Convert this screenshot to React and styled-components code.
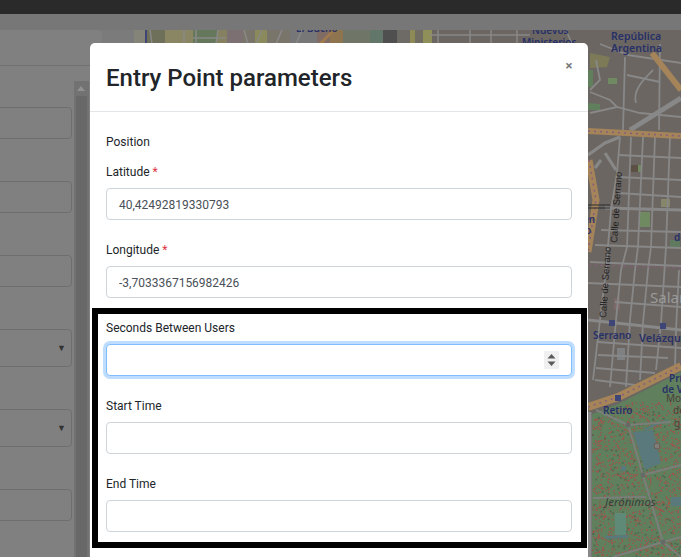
import { useMemo } from 'react';
import styled, { createGlobalStyle } from 'styled-components';

const GlobalStyle = createGlobalStyle`
    html, body {
        margin: 0;
        padding: 0;
        background: #808080;
    }
    * {
        box-sizing: border-box;
    }
`;

const Page = styled.div`
    position: relative;
    width: 681px;
    height: 557px;
    overflow: hidden;
    display: flex;
    flex-direction: column;
    background: #7b7b7b;
    font-family: Roboto, "Liberation Sans", sans-serif;
`;

const TopBar = styled.div`
    height: 14px;
    flex: none;
    background: #2b2a2b;
`;

const SubBar = styled.div`
    height: 16px;
    flex: none;
    background: #777777;
`;

const Workspace = styled.div`
    flex: 1;
    min-height: 0;
    display: flex;
    gap: 32px;
`;

const Sidebar = styled.aside`
    width: 102px;
    flex: none;
    display: flex;
    flex-direction: column;
    overflow: hidden;
    background: #808080;
    border-top-right-radius: 4px;
`;

const SidebarHead = styled.div`
    height: 36px;
    flex: none;
    border-bottom: 1px solid #707070;
`;

const SidebarBody = styled.div`
    flex: 1;
    display: flex;
    gap: 2px;
    min-height: 0;
`;

const SidebarFields = styled.div`
    width: 72px;
    flex: none;
    padding-top: 41px;
    display: flex;
    flex-direction: column;
    gap: 42px;
    overflow: hidden;
`;

const GhostField = styled.div`
    flex: none;
    height: ${(p) => (p.$select ? 38 : 32)}px;
    margin-left: -10px;
    display: flex;
    align-items: center;
    justify-content: flex-end;
    padding-right: 5px;
    border: 1px solid #6e6e6e;
    border-radius: 4px;
    color: #333333;
    font-size: 9px;
`;

const Scrollbar = styled.div`
    width: 15px;
    flex: none;
    margin-top: 15px;
    padding: 15px 2px 0;
    position: relative;
    background: #727272;
`;

const ScrollArrow = styled.span`
    position: absolute;
    top: 5px;
    left: 3px;
    width: 0;
    height: 0;
    border-left: 4px solid transparent;
    border-right: 4px solid transparent;
    border-bottom: 5px solid #919191;
`;

const ScrollThumb = styled.div`
    height: 100%;
    background: #686868;
`;

const MapPane = styled.div`
    flex: 1;
    min-width: 0;
    background: #6b6662;
`;

const MapSvg = styled.svg`
    display: block;
    width: 547px;
    height: 527px;
`;

const Modal = styled.section`
    position: absolute;
    top: 43px;
    left: 90px;
    width: 498px;
    background: #ffffff;
    border-radius: 5px 5px 0 0;
`;

const ModalHeader = styled.header`
    height: 69px;
    padding: 0 16px;
    position: relative;
    display: flex;
    align-items: center;
    border-bottom: 1px solid #e3e6e9;
`;

const ModalTitle = styled.h1`
    margin: 1px 0 0;
    font-size: 24px;
    font-weight: 500;
    line-height: 36px;
    color: #212529;
`;

const CloseButton = styled.button`
    position: absolute;
    top: 14px;
    right: 12px;
    width: 14px;
    height: 18px;
    padding: 0;
    border: 0;
    background: none;
    color: #777777;
    font-family: Roboto, sans-serif;
    font-size: 13px;
    font-weight: 700;
    line-height: 18px;
`;

const ModalBody = styled.div`
    padding: 20px 16px 40px;
    display: flex;
    flex-direction: column;
    gap: 20px;
`;

const SectionLabel = styled.div`
    height: 18px;
    margin-bottom: -8px;
    font-size: 12px;
    line-height: 20px;
    color: #212529;
`;

const Group = styled.div`
    display: flex;
    flex-direction: column;
    gap: 8px;
`;

const Label = styled.label`
    height: 18px;
    font-size: 12px;
    line-height: 20px;
    color: #212529;
`;

const Required = styled.span`
    color: #dc3545;
`;

const InputWrap = styled.div`
    position: relative;
    height: 32px;
`;

const Input = styled.input`
    display: block;
    width: 100%;
    height: 32px;
    padding: 2px 12px 0;
    border: 1px solid ${(p) => (p.$focused ? '#80bdff' : '#ced4da')};
    border-radius: 4px;
    outline: 0;
    background: #ffffff;
    box-shadow: ${(p) => (p.$focused ? '0 0 0 3px #bfdeff' : 'none')};
    font-family: inherit;
    font-size: 12px;
    color: #495057;
`;

const Spinner = styled.span`
    position: absolute;
    top: 7px;
    right: 13px;
    width: 15px;
    height: 18px;
    display: flex;
    align-items: center;
    justify-content: center;
    background: #f0f0f0;
`;

const Highlight = styled.div`
    position: absolute;
    top: 308px;
    left: 92px;
    width: 495px;
    height: 240px;
    border: 6px solid #000000;
    pointer-events: none;
`;

// colours are as they look under the modal backdrop
const C = {
    street: '#888888',
    orange: '#a5845a',
    dash: '#85607a',
    park: '#5f7f5d',
    parkPath: '#7b7f7b',
    water: '#5a797c',
    metro: '#3e4678',
    label: '#283068',
};

const streets = [
    // north-south grid
    'M620 137L617 173L611 210L606 270L600 320L593 380',
    'M631 137L627 247L621 270L616 320L610 387',
    'M643 137L638 247L635 270L630 320L626 387',
    'M655 137L651 247L648 270L643 323L640 380',
    'M670 137L666 247L661 323L656 370',
    'M679 270L676 330L675 367',
    'M625 57L623 130',
    'M660 44L659 130',
    // east-west grid
    'M618 155L681 158',
    'M618 177L681 180',
    'M618 193L681 197',
    'M601 230L681 232',
    'M595 245L681 248',
    'M590 262L681 266',
    'M588 283L681 287',
    'M615 302L681 307',
    'M598 342L681 348',
    'M598 355L668 358',
    'M596 368L655 373',
    'M595 380L635 385',
    'M628 55L681 63',
    'M627 75L660 82',
    'M590 113L617 107L640 113L681 117',
    // odd bits in the north part
    'M636 103C632 90 645 78 653 70',
    'M600 44L628 55',
    'M590 92L610 100L617 107',
    'M596 60L600 80L590 90',
];

const wideStreets = [
    'M605 208L681 210',
    'M588 320L681 330',
    'M605 153L616 170',
    'M588 155L605 143L620 137',
    'M601 160L595 168',
    'M589 412V557',
];

const parkPaths = [
    'M596 410L628 425L643 475L663 542',
    'M628 425L671 422',
    'M643 475L681 465',
    'M593 498L646 497',
    'M663 542L681 537',
    'M663 542L613 557',
    'M663 542L681 557',
];

const stripBlocks = [
    [134, 11, '#858478'], [145, 20, '#6e7059'], [165, 28, '#8a8664'], [193, 24, '#66785c'], [217, 10, '#85805f'],
    [227, 16, '#7c7072'], [243, 12, '#79756b'], [255, 12, '#8b8a5c'], [267, 23, '#79756b'], [290, 27, '#777777'], [317, 13, '#7f6c65'],
    [330, 13, '#8f754f'], [343, 27, '#6f7668'], [370, 13, '#62776a'], [383, 14, '#4f4f50'], [397, 13, '#6e6a66'],
    [410, 5, '#8d8a55'], [415, 8, '#716d63'], [423, 9, '#8f8f5a'], [432, 158, '#6b6662'],
];

const stripStreets = [
    [150, 152], [184, 184], [196, 196], [218, 216], [244, 248], [262, 256], [282, 276], [302, 296], [438, 438], [470, 470], [491, 491], [517, 517], [566, 572],
];

// small fake-random sprinkle for the trees in the park
const makeDots = (count, seedStart) => {
    const dots = [];
    let seed = seedStart;
    const next = () => {
        seed = (seed * 9301 + 49297) % 233280;
        return seed / 233280;
    };
    for (let i = 0; i < count; i++) {
        dots.push({ x: 592 + next() * 89, y: 402 + next() * 155 });
    }
    return dots;
};

const inPark = (d) => d.y > 418 - (d.x - 592) * 0.4;

const MapLabel = ({ x, y, size = 10, weight = 600, fill = C.label, italic, children }) => (
    <text
        x={x}
        y={y}
        fontFamily="'Noto Sans', sans-serif"
        fontSize={size}
        fontWeight={weight}
        fontStyle={italic ? 'italic' : 'normal'}
        fill={fill}
    >
        {children}
    </text>
);

const RoadLabel = ({ x, y, children }) => (
    <text
        transform={`translate(${x} ${y}) rotate(-86)`}
        fontFamily="'Liberation Sans', sans-serif"
        fontSize="9.5"
        fill="#1f1f1f"
    >
        {children}
    </text>
);

const CityMap = () => {
    const red = useMemo(() => makeDots(1100, 17).filter(inPark), []);
    const dark = useMemo(() => makeDots(160, 4242).filter(inPark), []);

    return (
        <MapSvg viewBox="134 30 547 527" aria-label="Map">
            {stripBlocks.map(([x, w, fill]) => (
                <rect key={x} x={x} y={30} width={w} height={14} fill={fill} />
            ))}
            {stripStreets.map(([x1, x2]) => (
                <line key={x1} x1={x1} y1={30} x2={x2} y2={44} stroke={C.street} strokeWidth="1.5" />
            ))}
            <path d="M193 38H226M430 35H530" stroke={C.street} strokeWidth="1.3" />
            <rect x={145} y={30} width={2} height={14} fill={C.metro} />
            <path d="M320 44L332 32" stroke="#a0794c" strokeWidth="3" />

            <path d="M590 53L610 57L607 67L590 68Z" fill="#7d7a58" />
            <path d="M588 70H593V87H588ZM588 103L600 104V110H588Z" fill={C.park} />
            <rect x={608} y={78} width={9} height={6} fill="#6f8a60" />
            <rect x={640} y={212} width={10} height={15} fill="#6f8a60" />
            <rect x={670} y={240} width={10} height={7} fill="#5f7a5e" />
            <rect x={631} y={165} width={7} height={7} fill="#5c5045" />
            <rect x={638} y={165} width={4} height={7} fill="#6f8a60" />
            <rect x={661} y={199} width={9} height={8} fill="#85866a" />
            <rect x={614} y={298} width={6} height={12} fill="#7d6a68" />
            <rect x={617} y={348} width={8} height={12} fill="#7f8082" />

            {streets.map((d) => (
                <path key={d} d={d} fill="none" stroke={C.street} strokeWidth="1.8" />
            ))}
            {wideStreets.map((d) => (
                <path key={d} d={d} fill="none" stroke={C.street} strokeWidth="3.2" />
            ))}
            <path d="M630 130L681 98" stroke={C.street} strokeWidth="5" />

            <path d="M652 53L681 90" stroke={C.orange} strokeWidth="6" />
            <path d="M588 131L681 136" stroke={C.orange} strokeWidth="6" />
            <path d="M588 131L681 136" stroke={C.dash} strokeWidth="1.6" strokeDasharray="2 4" />
            <path d="M589 160L596 200L588 252" fill="none" stroke={C.orange} strokeWidth="7" />
            <path d="M589 160L596 200L588 252" fill="none" stroke={C.dash} strokeWidth="1.6" strokeDasharray="2 4" />
            <path d="M588 205H610M588 208H610" stroke="#2a2a2a" strokeWidth="1" />
            <path d="M588 265L681 268" stroke={C.dash} strokeWidth="1" strokeDasharray="3 3" />

            <path d="M592 414L618 404L681 372V557H592Z" fill={C.park} />
            {red.map((d, i) => (
                <rect key={i} x={d.x} y={d.y} width="1.3" height="1.3" fill="#a5504a" />
            ))}
            {dark.map((d, i) => (
                <rect key={i} x={d.x} y={d.y} width="1.6" height="1.6" fill="#4c6650" />
            ))}
            <path d="M588 407L618 397L681 366" fill="none" stroke={C.orange} strokeWidth="8" />
            <path d="M588 407L618 397L681 366" fill="none" stroke={C.dash} strokeWidth="1.6" strokeDasharray="2 4" />
            <path d="M589 412V557" stroke={C.street} strokeWidth="5" />

            <path d="M633 432L653 430L661 463L645 470Z" fill={C.water} />
            <path d="M644 430L656 424L668 421" fill="none" stroke={C.water} strokeWidth="2" />
            <rect x={621} y={466} width={5} height={5} fill={C.water} />
            <rect x={671} y={497} width={10} height={9} fill={C.water} />
            <rect x={615} y={513} width={11} height={22} fill="#5f8a78" />
            <path d="M605 536L628 535V538L606 539Z" fill={C.water} />
            {parkPaths.map((d) => (
                <path key={d} d={d} fill="none" stroke={C.parkPath} strokeWidth="2" />
            ))}
            <circle cx={628} cy={425} r={2.5} fill="#666a66" />
            <circle cx={643} cy={475} r={2.5} fill="#666a66" />
            <circle cx={663} cy={542} r={2.5} fill="#666a66" />
            <circle cx={657} cy={446} r={3} fill="#7d7f7b" stroke="#6f5a55" />

            <rect x={609} y={320} width={6} height={6} fill={C.metro} />
            <rect x={660} y={323} width={6} height={6} fill={C.metro} />
            <rect x={615} y={395} width={6} height={6} fill={C.metro} />

            <MapLabel x={611} y={40} size={10.5}>República</MapLabel>
            <MapLabel x={611} y={52} size={10.5}>Argentina</MapLabel>
            <MapLabel x={532} y={34}>Nuevos</MapLabel>
            <MapLabel x={522} y={46}>Ministerios</MapLabel>
            <MapLabel x={296} y={32}>El Bucho</MapLabel>
            <MapLabel x={583} y={223}>en</MapLabel>
            <MapLabel x={585} y={234}>o</MapLabel>
            <MapLabel x={674} y={241}>de</MapLabel>
            <MapLabel x={593} y={339}>Serrano</MapLabel>
            <MapLabel x={639} y={342} size={11}>Velázquez</MapLabel>
            <MapLabel x={669} y={382}>Prí</MapLabel>
            <MapLabel x={662} y={393}>de V</MapLabel>
            <MapLabel x={603} y={414}>Retiro</MapLabel>
            <MapLabel x={650} y={303} size={15} weight={400} fill="#9a9a9a">Salam</MapLabel>
            <MapLabel x={666} y={402} weight={400} fill="#4a4038">Mo</MapLabel>
            <MapLabel x={673} y={414} weight={400} fill="#4a4038">de</MapLabel>
            <MapLabel x={674} y={427} weight={400} fill="#4a4038">g</MapLabel>
            <MapLabel x={605} y={506} size={11.5} weight={400} fill="#38403a" italic>Jerónimos</MapLabel>
            <RoadLabel x={617} y={243}>Calle de Serrano</RoadLabel>
            <RoadLabel x={606} y={318}>Calle de Serrano</RoadLabel>
        </MapSvg>
    );
};

const Field = ({ label, required, value, focused, spinner }) => (
    <Group>
        <Label>
            {label}
            {required && <Required> *</Required>}
        </Label>
        <InputWrap>
            <Input readOnly value={value || ''} $focused={focused} />
            {spinner && (
                <Spinner>
                    <svg width="9" height="14" viewBox="0 0 9 14">
                        <path d="M4.5 1L8.5 5.5H.5ZM.5 8.5H8.5L4.5 13Z" fill="#5a5a5a" />
                    </svg>
                </Spinner>
            )}
        </InputWrap>
    </Group>
);

export default function App() {
    return (
        <Page>
            <GlobalStyle />
            <TopBar />
            <SubBar />
            <Workspace>
                <Sidebar>
                    <SidebarHead />
                    <SidebarBody>
                        <SidebarFields>
                            <GhostField />
                            <GhostField />
                            <GhostField />
                            <GhostField $select>▼</GhostField>
                            <GhostField $select>▼</GhostField>
                            <GhostField />
                        </SidebarFields>
                        <Scrollbar>
                            <ScrollArrow />
                            <ScrollThumb />
                        </Scrollbar>
                    </SidebarBody>
                </Sidebar>
                <MapPane>
                    <CityMap />
                </MapPane>
            </Workspace>

            <Modal>
                <ModalHeader>
                    <ModalTitle>Entry Point parameters</ModalTitle>
                    <CloseButton>×</CloseButton>
                </ModalHeader>
                <ModalBody>
                    <SectionLabel>Position</SectionLabel>
                    <Field label="Latitude" required value="40,42492819330793" />
                    <Field label="Longitude" required value="-3,7033367156982426" />
                    <Field label="Seconds Between Users" focused spinner />
                    <Field label="Start Time" />
                    <Field label="End Time" />
                </ModalBody>
            </Modal>
            <Highlight />
        </Page>
    );
}
